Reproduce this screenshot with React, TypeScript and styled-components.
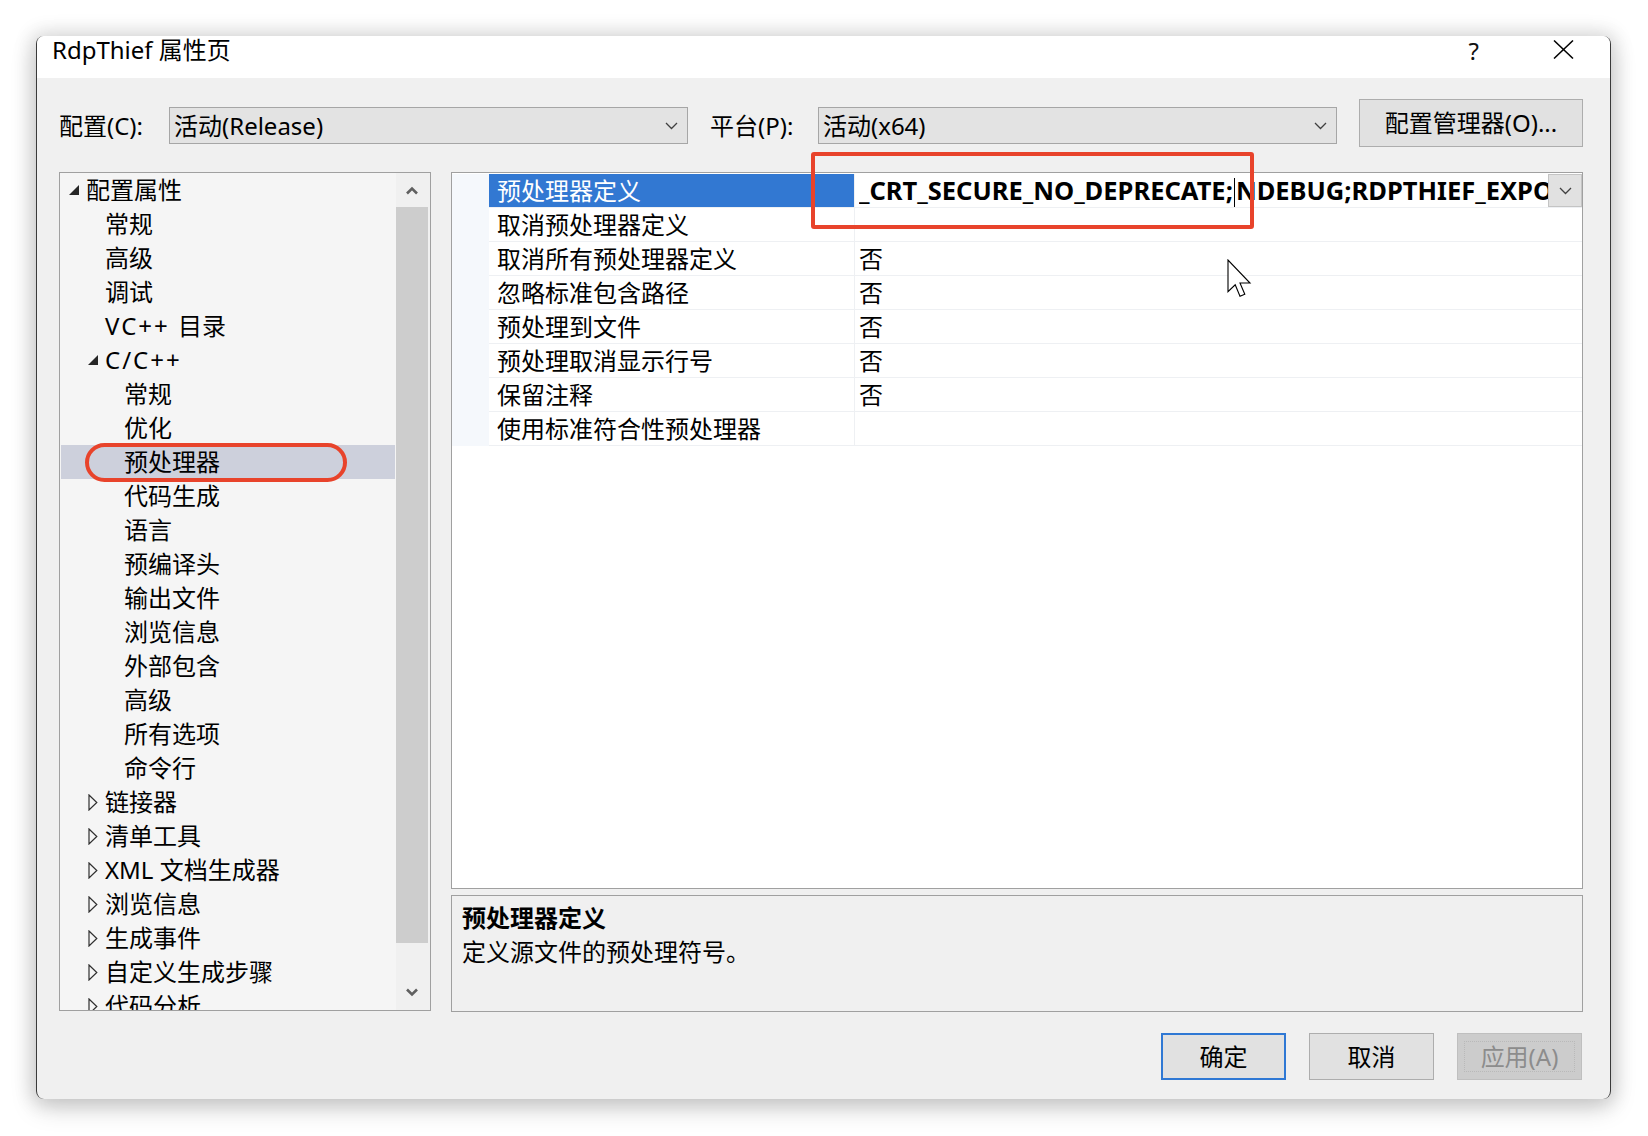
import React from "react";
import styled, { createGlobalStyle } from "styled-components";

const GlobalStyle = createGlobalStyle`
  html, body { margin: 0; padding: 0; background: #ffffff; }
  body {
    width: 1648px; height: 1136px; overflow: hidden;
    font-family: "Noto Sans", "Noto Sans CJK SC", sans-serif;
    color: #000;
  }
  * { box-sizing: border-box; }
`;

const Page = styled.div`
  position: relative;
  width: 1648px;
  height: 1136px;
  padding: 36px 0 0 36px;
  background: #ffffff;
`;

const Window = styled.div`
  width: 1575px;
  height: 1063px;
  display: flex;
  flex-direction: column;
  background: #f0f0f0;
  border-left: 1px solid #3a3a3a;
  border-right: 1px solid #3a3a3a;
  border-radius: 8px;
  overflow: hidden;
  box-shadow: 0 0 18px 6px rgba(0, 0, 0, 0.1), 0 8px 26px rgba(0, 0, 0, 0.18);
`;

const TitleBar = styled.div`
  height: 42px;
  flex: none;
  background: #ffffff;
  display: flex;
  align-items: flex-start;
  padding: 0 36px 0 15px;
`;

const TitleText = styled.div`
  font-size: 24px;
  line-height: 27px;
  white-space: nowrap;
`;

const HelpGlyph = styled.div`
  margin-left: auto;
  font-size: 24px;
  line-height: 30px;
  color: #111;
`;

const CloseGlyph = styled.svg`
  margin-left: 74px;
  margin-top: 4px;
  flex: none;
`;

const Body = styled.div`
  flex: 1;
  min-height: 0;
  display: flex;
  flex-direction: column;
  padding: 21px 27px 19px 22px;
`;

const ConfigRow = styled.div`
  display: flex;
  align-items: flex-start;
  height: 48px;
  flex: none;
`;

const FieldLabel = styled.div<{ $w: number }>`
  width: ${(p) => p.$w}px;
  flex: none;
  margin-top: 8px;
  font-size: 24px;
  line-height: 37px;
  white-space: nowrap;
`;

const Combo = styled.div<{ $gapRight?: number }>`
  width: 519px;
  height: 37px;
  flex: none;
  margin-top: 8px;
  margin-right: ${(p) => p.$gapRight ?? 0}px;
  background: #e3e3e3;
  border: 1px solid #a6a6a6;
  display: flex;
  align-items: center;
  padding: 0 9px 0 4px;
  font-size: 24px;
  line-height: 35px;
  white-space: nowrap;
`;

const ComboText = styled.span`
  flex: 1;
`;

const PushButton = styled.div<{ $w: number; $h: number; $primary?: boolean; $disabled?: boolean }>`
  position: relative;
  width: ${(p) => p.$w}px;
  height: ${(p) => p.$h}px;
  flex: none;
  display: flex;
  align-items: center;
  justify-content: center;
  background: ${(p) => (p.$disabled ? "#cccccc" : "#e1e1e1")};
  border: ${(p) => (p.$primary ? "2px solid #2f78d4" : p.$disabled ? "1px solid #bfbfbf" : "1px solid #adadad")};
  color: ${(p) => (p.$disabled ? "#8c8c8c" : "#000")};
  font-size: 24px;
  line-height: 30px;
  white-space: nowrap;
  ${(p) =>
    p.$disabled
      ? `&::after { content: ""; position: absolute; inset: 7px 6px; border: 1px dotted #b9b9b9; }`
      : ""}
`;

const ManagerButton = styled(PushButton)`
  margin-left: auto;
`;

const Main = styled.div`
  display: flex;
  gap: 20px;
  height: 840px;
  margin-top: 25px;
  flex: none;
  min-width: 0;
`;

const TreePanel = styled.div`
  width: 372px;
  height: 839px;
  flex: none;
  display: flex;
  border: 1px solid #a0a0a0;
  background: #f5f5f5;
`;

const TreeList = styled.div`
  flex: 1;
  min-width: 0;
  overflow: hidden;
`;

const TreeRow = styled.div<{ $level: number; $selected?: boolean }>`
  height: 34px;
  display: flex;
  align-items: center;
  padding-left: ${(p) => 8 + p.$level * 19}px;
  margin: 0 1px;
  background: ${(p) => (p.$selected ? "#cdd0dc" : "transparent")};
  font-size: 24px;
  line-height: 34px;
  white-space: nowrap;
`;

const TreeLatin = styled.span<{ $spacing: number }>`
  letter-spacing: ${(p) => p.$spacing}px;
  white-space: pre;
`;

const ExpanderSlot = styled.span`
  width: 17px;
  flex: none;
  display: flex;
  align-items: center;
`;

const Scrollbar = styled.div`
  width: 34px;
  flex: none;
  display: flex;
  flex-direction: column;
  background: #f0f0f0;
`;

const ScrollButton = styled.div<{ $h: number }>`
  height: ${(p) => p.$h}px;
  flex: none;
  display: flex;
  align-items: center;
  justify-content: center;
  padding-right: 2px;
`;

const ScrollThumb = styled.div`
  height: 736px;
  flex: none;
  margin-right: 2px;
  background: #cdcdcd;
`;

const ScrollTrack = styled.div`
  flex: 1;
`;

const RightColumn = styled.div`
  flex: 1;
  min-width: 0;
  display: flex;
  flex-direction: column;
  gap: 6px;
`;

const Grid = styled.div`
  flex: 1;
  min-width: 0;
  border: 1px solid #a0a0a0;
  background: #ffffff;
  padding-top: 1px;
  overflow: hidden;
`;

const GridRow = styled.div`
  display: flex;
  height: 34px;
`;

const Gutter = styled.div`
  width: 37px;
  flex: none;
  background: #f5f8fc;
`;

const NameCell = styled.div<{ $selected?: boolean }>`
  width: 366px;
  flex: none;
  padding-left: 8px;
  border-right: 1px solid #eef0f3;
  border-bottom: 1px solid #eef0f3;
  background: ${(p) => (p.$selected ? "#3278d2" : "#ffffff")};
  color: ${(p) => (p.$selected ? "#ffffff" : "#000000")};
  font-size: 24px;
  line-height: 33px;
  white-space: nowrap;
`;

const ValueCell = styled.div`
  flex: 1;
  min-width: 0;
  display: flex;
  align-items: stretch;
  padding-left: 4px;
  border-bottom: 1px solid #eef0f3;
  font-size: 24px;
  line-height: 33px;
`;

const ValueText = styled.div<{ $bold?: boolean }>`
  flex: 1;
  min-width: 0;
  overflow: hidden;
  white-space: nowrap;
  font-weight: ${(p) => (p.$bold ? 700 : 400)};
  font-size: ${(p) => (p.$bold ? "25.5px" : "24px")};
`;

const Caret = styled.span`
  display: inline-block;
  width: 1px;
  height: 30px;
  margin: 0 1px;
  vertical-align: middle;
  background: #000;
`;

const DropButton = styled.div`
  width: 34px;
  flex: none;
  display: flex;
  align-items: center;
  justify-content: center;
  background: #e1e1e1;
  border: 1px solid #c4c4c4;
`;

const DescPanel = styled.div`
  height: 117px;
  flex: none;
  border: 1px solid #a0a0a0;
  background: #f0f0f0;
  padding: 5px 10px;
  font-size: 24px;
  line-height: 34px;
`;

const DescTitle = styled.div`
  font-weight: 700;
`;

const ButtonRow = styled.div`
  display: flex;
  justify-content: flex-end;
  gap: 23px;
  margin-top: 21px;
  padding-right: 1px;
`;

const RedPill = styled.div`
  position: absolute;
  left: 85px;
  top: 443px;
  width: 262px;
  height: 39px;
  border: 4px solid #e8432b;
  border-radius: 20px;
  pointer-events: none;
`;

const RedBox = styled.div`
  position: absolute;
  left: 811px;
  top: 152px;
  width: 443px;
  height: 77px;
  border: 4px solid #e8432b;
  border-radius: 3px;
  pointer-events: none;
`;

const MouseCursor = styled.svg`
  position: absolute;
  left: 1227px;
  top: 259px;
  pointer-events: none;
`;

const ThinChevron = () => (
  <svg width="13" height="8" viewBox="0 0 13 8">
    <polyline points="1,1 6.5,6.5 12,1" fill="none" stroke="#404040" strokeWidth="1.3" />
  </svg>
);

const ScrollChevron = ({ up }: { up?: boolean }) => (
  <svg width="12" height="9" viewBox="0 0 12 9">
    <polyline
      points={up ? "1,7.5 6,2.5 11,7.5" : "1,1.5 6,6.5 11,1.5"}
      fill="none"
      stroke="#606060"
      strokeWidth="2.6"
    />
  </svg>
);

const OpenArrow = () => (
  <svg width="10" height="10" viewBox="0 0 10 10">
    <polygon points="10,0 10,10 0,10" fill="#262626" />
  </svg>
);

const ClosedArrow = () => (
  <svg width="10" height="17" viewBox="0 0 10 17">
    <polygon points="1,1 8.8,8.5 1,16" fill="none" stroke="#303030" strokeWidth="1.2" strokeLinejoin="miter" />
  </svg>
);

type TreeItem = {
  latin?: string;
  spacing?: number;
  label: string;
  level: number;
  exp?: "open" | "closed";
  selected?: boolean;
};

const treeItems: TreeItem[] = [
  { label: "配置属性", level: 0, exp: "open" },
  { label: "常规", level: 1 },
  { label: "高级", level: 1 },
  { label: "调试", level: 1 },
  { latin: "VC++ ", spacing: 2, label: "目录", level: 1 },
  { latin: "C/C++", spacing: 2, label: "", level: 1, exp: "open" },
  { label: "常规", level: 2 },
  { label: "优化", level: 2 },
  { label: "预处理器", level: 2, selected: true },
  { label: "代码生成", level: 2 },
  { label: "语言", level: 2 },
  { label: "预编译头", level: 2 },
  { label: "输出文件", level: 2 },
  { label: "浏览信息", level: 2 },
  { label: "外部包含", level: 2 },
  { label: "高级", level: 2 },
  { label: "所有选项", level: 2 },
  { label: "命令行", level: 2 },
  { label: "链接器", level: 1, exp: "closed" },
  { label: "清单工具", level: 1, exp: "closed" },
  { latin: "XML ", spacing: 0, label: "文档生成器", level: 1, exp: "closed" },
  { label: "浏览信息", level: 1, exp: "closed" },
  { label: "生成事件", level: 1, exp: "closed" },
  { label: "自定义生成步骤", level: 1, exp: "closed" },
  { label: "代码分析", level: 1, exp: "closed" },
];

type Prop = { name: string; value: string };

const props: Prop[] = [
  { name: "预处理器定义", value: "" },
  { name: "取消预处理器定义", value: "" },
  { name: "取消所有预处理器定义", value: "否" },
  { name: "忽略标准包含路径", value: "否" },
  { name: "预处理到文件", value: "否" },
  { name: "预处理取消显示行号", value: "否" },
  { name: "保留注释", value: "否" },
  { name: "使用标准符合性预处理器", value: "" },
];

export default function App() {
  return (
    <>
      <GlobalStyle />
      <Page>
        <Window>
          <TitleBar>
            <TitleText>RdpThief 属性页</TitleText>
            <HelpGlyph>?</HelpGlyph>
            <CloseGlyph width="21" height="19" viewBox="0 0 21 19">
              <line x1="1" y1="0.5" x2="20" y2="18.5" stroke="#000" strokeWidth="1.5" />
              <line x1="20" y1="0.5" x2="1" y2="18.5" stroke="#000" strokeWidth="1.5" />
            </CloseGlyph>
          </TitleBar>
          <Body>
            <ConfigRow>
              <FieldLabel $w={110}>配置(C):</FieldLabel>
              <Combo $gapRight={22}>
                <ComboText>活动(Release)</ComboText>
                <ThinChevron />
              </Combo>
              <FieldLabel $w={108}>平台(P):</FieldLabel>
              <Combo>
                <ComboText>活动(x64)</ComboText>
                <ThinChevron />
              </Combo>
              <ManagerButton $w={224} $h={48}>配置管理器(O)...</ManagerButton>
            </ConfigRow>
            <Main>
              <TreePanel>
                <TreeList>
                  {treeItems.map((it, i) => (
                    <TreeRow key={i} $level={it.level} $selected={it.selected}>
                      <ExpanderSlot>
                        {it.exp === "open" && <OpenArrow />}
                        {it.exp === "closed" && <ClosedArrow />}
                      </ExpanderSlot>
                      {it.latin && <TreeLatin $spacing={it.spacing ?? 0}>{it.latin}</TreeLatin>}
                      {it.label}
                    </TreeRow>
                  ))}
                </TreeList>
                <Scrollbar>
                  <ScrollButton $h={34}>
                    <ScrollChevron up />
                  </ScrollButton>
                  <ScrollThumb />
                  <ScrollTrack />
                  <ScrollButton $h={35}>
                    <ScrollChevron />
                  </ScrollButton>
                </Scrollbar>
              </TreePanel>
              <RightColumn>
                <Grid>
                  {props.map((p, i) => (
                    <GridRow key={i}>
                      <Gutter />
                      <NameCell $selected={i === 0}>{p.name}</NameCell>
                      <ValueCell>
                        {i === 0 ? (
                          <>
                            <ValueText $bold>
                              _CRT_SECURE_NO_DEPRECATE;
                              <Caret />
                              NDEBUG;RDPTHIEF_EXPORTS;_WINDOWS;_USRDLL;%(PreprocessorDefinitions)
                            </ValueText>
                            <DropButton>
                              <ThinChevron />
                            </DropButton>
                          </>
                        ) : (
                          <ValueText>{p.value}</ValueText>
                        )}
                      </ValueCell>
                    </GridRow>
                  ))}
                </Grid>
                <DescPanel>
                  <DescTitle>预处理器定义</DescTitle>
                  <div>定义源文件的预处理符号。</div>
                </DescPanel>
              </RightColumn>
            </Main>
            <ButtonRow>
              <PushButton $w={125} $h={47} $primary>确定</PushButton>
              <PushButton $w={125} $h={47}>取消</PushButton>
              <PushButton $w={125} $h={47} $disabled>应用(A)</PushButton>
            </ButtonRow>
          </Body>
        </Window>
        <RedBox />
        <RedPill />
        <MouseCursor width="26" height="39" viewBox="0 0 13 19.5">
          <polygon
            points="0.5,0.5 0.5,16.3 4.1,12.9 6.5,18.6 8.9,17.6 6.5,12 11.5,12"
            fill="#ffffff"
            stroke="#000000"
            strokeWidth="0.55"
            strokeLinejoin="miter"
          />
        </MouseCursor>
      </Page>
    </>
  );
}
